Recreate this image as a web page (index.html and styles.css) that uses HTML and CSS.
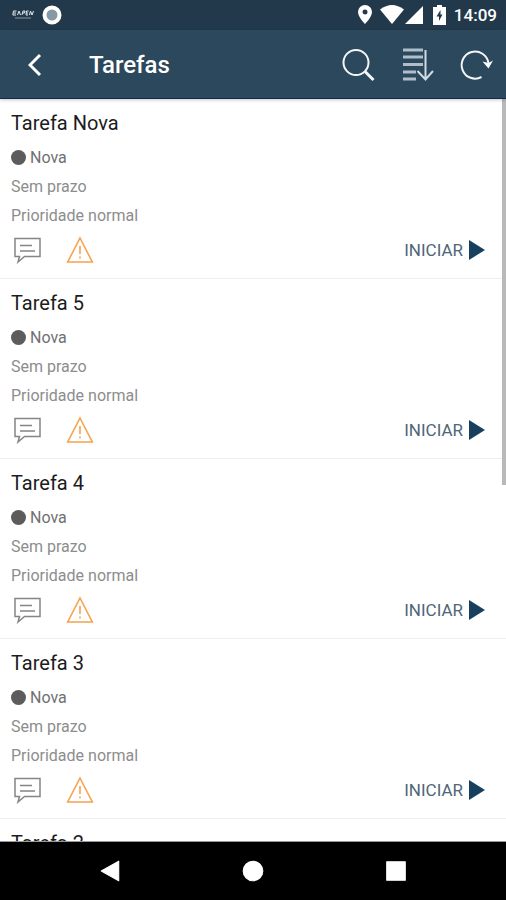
FILE: index.html
```html
<!DOCTYPE html>
<html lang="pt">
<head>
<meta charset="utf-8">
<meta name="viewport" content="width=device-width, initial-scale=1">
<title>Tarefas</title>
<link rel="stylesheet" href="styles.css">
</head>
<body>
<svg class="sprite" aria-hidden="true">
  <symbol id="comment" viewBox="0 0 28 28"><path d="M1 2.500H26V20.500H10.500L4 26L5.500 20.500H1Z"/><path d="M6 9.500H18M6 15H21"/></symbol>
  <symbol id="warning" viewBox="0 0 28 28"><path d="M14 2L26.300 26H1.700Z"/><path d="M14 10V18M14 20.500V22.500"/></symbol>
  <symbol id="play" viewBox="0 0 16 20"><path d="M0 0L16 10L0 20Z"/></symbol>
</svg>
<div class="statusbar">
  <svg class="brand" viewBox="0 0 22 12" aria-hidden="true"><path d="M4.500 2H1.500L.8 6H4M1.500 4H4M5.500 6L7 2L8.500 6M10 6L11 2H13L12.500 4H10.500M16.500 2H14.500L14 6H16M14.500 4H16M17.500 6L18.500 2L20 6L21.500 2"/><path class="faint" d="M3 9h16"/></svg>
  <svg class="disc" viewBox="0 0 20 20" aria-hidden="true"><circle cx="10" cy="10" r="7.500"/></svg>
  <span class="spacer"></span>
  <svg class="pin" viewBox="0 0 14 20" aria-hidden="true"><path fill-rule="evenodd" d="M7 0a7 7 0 0 0-7 7c0 5 7 12 7 12s7-7 7-12a7 7 0 0 0-7-7Zm0 4.500a2.500 2.500 0 1 1 0 5a2.500 2.500 0 0 1 0-5Z"/></svg>
  <svg class="wifi" viewBox="0 0 24 20" aria-hidden="true"><path d="M0 4.500Q12-4.500 24 4.500L12 19Z"/></svg>
  <svg class="signal" viewBox="0 0 18 18" aria-hidden="true"><path d="M18 0V18H0Z"/></svg>
  <svg class="battery" viewBox="0 0 13 20" aria-hidden="true"><path fill-rule="evenodd" d="M4 0h5v2h4v18H0V2h4ZM7.500 5L3.500 11.500H6V16L9.500 9.500H7.500Z"/></svg>
  <time class="clock">14:09</time>
</div>
<header class="appbar">
  <button class="icon-button" aria-label="Voltar"><svg class="chevron" viewBox="0 0 14 24"><path d="M12 2L2 12L12 22"/></svg></button>
  <h1 class="heading">Tarefas</h1>
  <button class="icon-button" aria-label="Pesquisar"><svg class="tool" viewBox="0 0 34 34"><circle cx="15" cy="14.500" r="12.500"/><path class="thick" d="M24 23.500L32.500 32"/></svg></button>
  <button class="icon-button" aria-label="Ordenar"><svg class="tool sort" viewBox="0 0 34 34"><path class="bars" d="M3 2H23M3 9H23M3 16.500H23M3 24H16M3 31H16"/><path d="M25.500 2V31M17.500 23L25.500 31.500L33 23"/></svg></button>
  <button class="icon-button" aria-label="Atualizar"><svg class="tool" viewBox="0 0 34 34"><path d="M22.500 29A13.500 13.500 0 1 1 29.500 15"/><path class="tip" d="M23.500 13.500L29.500 15L34 12.500L29.500 20.500Z"/></svg></button>
</header>
<main class="content">
  <ul class="tasks">
    <li class="task">
      <h2 class="title">Tarefa Nova</h2>
      <p class="state"><span class="dot"></span>Nova</p>
      <p class="detail">Sem prazo</p>
      <p class="detail">Prioridade normal</p>
      <div class="actions"><button class="mini" aria-label="Comentários"><svg class="comment"><use href="#comment"/></svg></button><button class="mini" aria-label="Avisos"><svg class="warning"><use href="#warning"/></svg></button><button class="start">INICIAR<svg class="play" aria-hidden="true"><use href="#play"/></svg></button></div>
    </li>
    <li class="task">
      <h2 class="title">Tarefa 5</h2>
      <p class="state"><span class="dot"></span>Nova</p>
      <p class="detail">Sem prazo</p>
      <p class="detail">Prioridade normal</p>
      <div class="actions"><button class="mini" aria-label="Comentários"><svg class="comment"><use href="#comment"/></svg></button><button class="mini" aria-label="Avisos"><svg class="warning"><use href="#warning"/></svg></button><button class="start">INICIAR<svg class="play" aria-hidden="true"><use href="#play"/></svg></button></div>
    </li>
    <li class="task">
      <h2 class="title">Tarefa 4</h2>
      <p class="state"><span class="dot"></span>Nova</p>
      <p class="detail">Sem prazo</p>
      <p class="detail">Prioridade normal</p>
      <div class="actions"><button class="mini" aria-label="Comentários"><svg class="comment"><use href="#comment"/></svg></button><button class="mini" aria-label="Avisos"><svg class="warning"><use href="#warning"/></svg></button><button class="start">INICIAR<svg class="play" aria-hidden="true"><use href="#play"/></svg></button></div>
    </li>
    <li class="task">
      <h2 class="title">Tarefa 3</h2>
      <p class="state"><span class="dot"></span>Nova</p>
      <p class="detail">Sem prazo</p>
      <p class="detail">Prioridade normal</p>
      <div class="actions"><button class="mini" aria-label="Comentários"><svg class="comment"><use href="#comment"/></svg></button><button class="mini" aria-label="Avisos"><svg class="warning"><use href="#warning"/></svg></button><button class="start">INICIAR<svg class="play" aria-hidden="true"><use href="#play"/></svg></button></div>
    </li>
    <li class="task">
      <h2 class="title">Tarefa 2</h2>
    </li>
  </ul>
  <span class="scroll-thumb"></span>
</main>
<nav class="navbar">
  <button class="icon-button" aria-label="Anterior"><svg class="key" viewBox="0 0 20 22"><path d="M18 2V20L2 11Z"/></svg></button>
  <button class="icon-button" aria-label="Início"><svg class="key" viewBox="0 0 20 22"><circle cx="10" cy="11" r="9"/></svg></button>
  <button class="icon-button" aria-label="Recentes"><svg class="key" viewBox="0 0 20 22"><rect x="1.500" y="2.500" width="17" height="17"/></svg></button>
</nav>
</body>
</html>
```
FILE: styles.css
```css
* { box-sizing: border-box; }

body {
  margin: 0;
  height: 100vh;
  display: flex;
  flex-direction: column;
  overflow: hidden;
  background: #fff;
  font-family: Roboto, "Liberation Sans", sans-serif;
}

h1, h2, p, ul { margin: 0; padding: 0; }

button {
  border: 0;
  padding: 0;
  background: none;
  color: inherit;
  font: inherit;
}

svg { display: block; flex: none; }

.sprite { position: absolute; width: 0; height: 0; }

.statusbar {
  display: flex;
  flex: none;
  align-items: center;
  height: 30px;
  padding: 0 9px 0 12px;
  background: #21394b;
  color: #fff;
  fill: currentColor;
}

.brand { width: 22px; height: 12px; fill: none; stroke: #e3e8eb; stroke-width: 1; }
.faint { stroke: #8797a3; }
.disc { width: 20px; height: 20px; margin-left: 8px; fill: #8799a6; stroke: #fff; stroke-width: 4; }
.spacer { flex: 1; }
.pin { width: 14px; height: 20px; }
.wifi { width: 24px; height: 20px; margin-left: 8px; }
.signal { width: 18px; height: 18px; margin-left: 1px; }
.battery { width: 13px; height: 20px; margin-left: 10px; }
.clock { margin-left: 8px; font-size: 17px; font-weight: 500; line-height: 30px; }

.appbar {
  position: relative;
  z-index: 1;
  display: flex;
  flex: none;
  align-items: center;
  height: 69px;
  padding: 1px 13px 0 28px;
  gap: 25px;
  background: #2b485d;
  border-bottom: 1px solid #142858;
  box-shadow: 0 1px 3px rgba(40, 20, 30, 0.25);
  color: #fff;
}

.chevron { width: 14px; height: 24px; fill: none; stroke: #fff; stroke-width: 3; }
.heading { flex: 1; margin-left: 22px; font-size: 24px; font-weight: 500; line-height: 32px; }
.tool { width: 34px; height: 34px; fill: none; stroke: #f2f6f8; stroke-width: 2; }
.thick { stroke-width: 3; }
.sort { stroke: #cfdae2; }
.bars { stroke: #afbec9; stroke-width: 3; }
.tip { fill: #fff; stroke: none; }

.content {
  position: relative;
  flex: 1;
  min-height: 0;
  overflow: hidden;
  border-bottom: 1px solid #999;
}

.tasks { list-style: none; }
.task { padding: 9px 21px 8px 11px; border-bottom: 1px solid #eee; }
.title { margin-bottom: 5px; color: #1c1c1c; font-size: 20px; font-weight: 400; line-height: 30px; }
.state, .detail { font-size: 16px; line-height: 29px; }
.state { display: flex; align-items: center; gap: 4px; color: #707070; }
.detail { color: #8d8d8d; }
.dot { width: 15px; height: 15px; border-radius: 50%; background: #5c5c5c; }
.actions { display: flex; align-items: center; gap: 24px; height: 40px; padding-left: 3px; }
.comment, .warning { width: 28px; height: 28px; fill: none; }
.comment { stroke: #858585; stroke-width: 1.5; }
.warning { stroke: #f5a34f; stroke-width: 1.6; }
.start { display: flex; align-items: center; gap: 6px; margin-left: auto; color: #4f6677; font-size: 17px; line-height: 24px; }
.play { width: 16px; height: 20px; fill: #17405f; }

.scroll-thumb {
  position: absolute;
  top: 0;
  right: 0;
  width: 4px;
  height: 52%;
  background: #b9b9b9;
}

.navbar {
  display: grid;
  flex: none;
  grid-template-columns: repeat(3, 1fr);
  height: 58px;
  padding: 0 39px;
  background: #000;
}

.navbar .icon-button { display: grid; place-items: center; }
.key { width: 22px; height: 24px; fill: #fff; stroke: #fff; stroke-width: 1; stroke-linejoin: round; }
```
